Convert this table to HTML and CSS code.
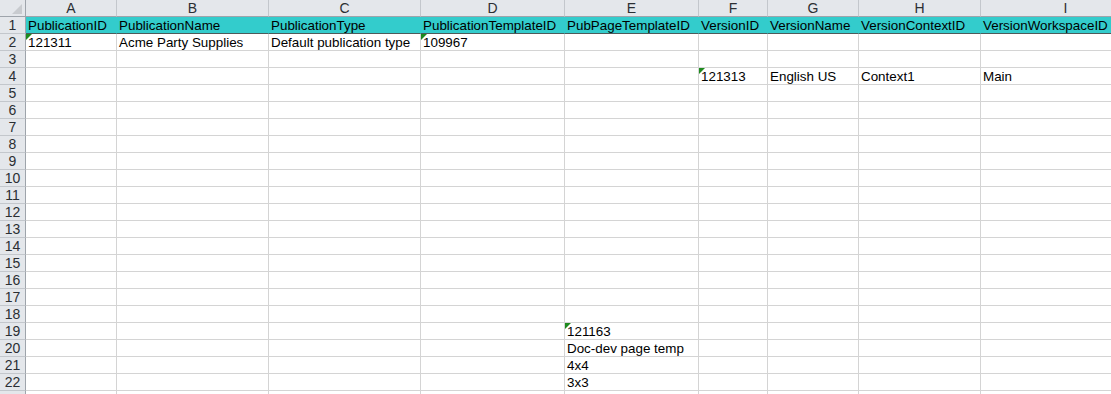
FILE: index.html
```html
<!DOCTYPE html>
<html>
<head>
  <title>Publications.xlsx</title>
  <link rel="stylesheet" href="styles.css">
</head>
<body>
  <div class="sheet" id="sheet"></div>

  <script>
    const letters = ["A", "B", "C", "D", "E", "F", "G", "H", "I"];

    // row number -> { column index: [text, storedAsText] }
    const data = {
      1: ["PublicationID", "PublicationName", "PublicationType", "PublicationTemplateID",
          "PubPageTemplateID", "VersionID", "VersionName", "VersionContextID", "VersionWorkspaceID"],
      2: { 0: ["121311", true], 1: ["Acme Party Supplies"], 2: ["Default publication type"], 3: ["109967", true] },
      4: { 5: ["121313", true], 6: ["English US"], 7: ["Context1"], 8: ["Main"] },
      19: { 4: ["121163", true] },
      20: { 4: ["Doc-dev page temp"] },
      21: { 4: ["4x4"] },
      22: { 4: ["3x3"] }
    };

    const sheet = document.getElementById("sheet");

    function addCell(cls, text) {
      const cell = document.createElement("div");
      cell.className = cls;
      if (text) cell.innerText = text;
      sheet.appendChild(cell);
      return cell;
    }

    // column headers
    const corner = addCell("corner");
    corner.innerHTML = '<span class="corner-mark"></span>';
    letters.forEach(l => addCell("col-head", l));

    // 22 rows, plus the edge of the next one below the fold
    for (let r = 1; r <= 23; r++) {
      addCell("row-head", r < 23 ? String(r) : "");
      for (let c = 0; c < letters.length; c++) {
        if (r === 1) {
          addCell("cell title", data[1][c]);
          continue;
        }
        const row = data[r] || {};
        const value = row[c];
        let cls = "cell";
        if (value && value[1]) cls += " text-num";
        addCell(cls, value ? value[0] : "");
      }
    }
  </script>
</body>
</html>
```

FILE: styles.css
```css
body {
  margin: 0;
  background: white;
  overflow: hidden;
  font-family: "Liberation Sans", Arial, sans-serif;
}
.sheet {
  display: grid;
  grid-template-columns: 26px 91px 152px 152px 144px 134px 69px 91px 122px 170px;
  grid-auto-rows: 17px;
  width: 1151px;
}
.sheet > div {
  box-sizing: border-box;
  border-right: 1px solid #d4d4d4;
  border-bottom: 1px solid #d4d4d4;
  white-space: nowrap;
  overflow: hidden;
}
.corner {
  background: #e4e7eb;
  display: flex;
  align-items: flex-end;
  justify-content: flex-end;
  padding: 0 3px 2px 0;
}
.sheet > .corner,
.sheet > .row-head {
  border-right-color: #9ea4ab;
}
.sheet > .corner,
.sheet > .col-head {
  border-bottom-color: #9ea4ab;
}
.corner-mark {
  width: 10px;
  height: 10px;
  background: #c8cbcf;
  clip-path: polygon(100% 0, 100% 100%, 0 100%);
}
.col-head {
  background: #e4e7eb;
  color: #2b2f33;
  font-size: 14px;
  line-height: 16px;
  text-align: center;
}
.sheet > .col-head {
  border-right-color: #c3c7cc;
}
.row-head {
  background: #e4e7eb;
  color: #2b2f33;
  font-size: 14px;
  line-height: 17px;
  text-align: center;
}
.sheet > .row-head {
  border-bottom-color: #c3c7cc;
}
.cell {
  position: relative;
  font-size: 13.4px;
  line-height: 17px;
  padding-left: 2px;
  color: #000;
}
.sheet > .title {
  background: #33cccc;
  border-right-color: #33cccc;
  border-bottom-color: #4d5a5a;
}
/* green marker for numbers stored as text */
.text-num::before {
  content: "";
  position: absolute;
  top: 0;
  left: 0;
  width: 6px;
  height: 6px;
  background: #1e8a1e;
  clip-path: polygon(0 0, 100% 0, 0 100%);
}
```
